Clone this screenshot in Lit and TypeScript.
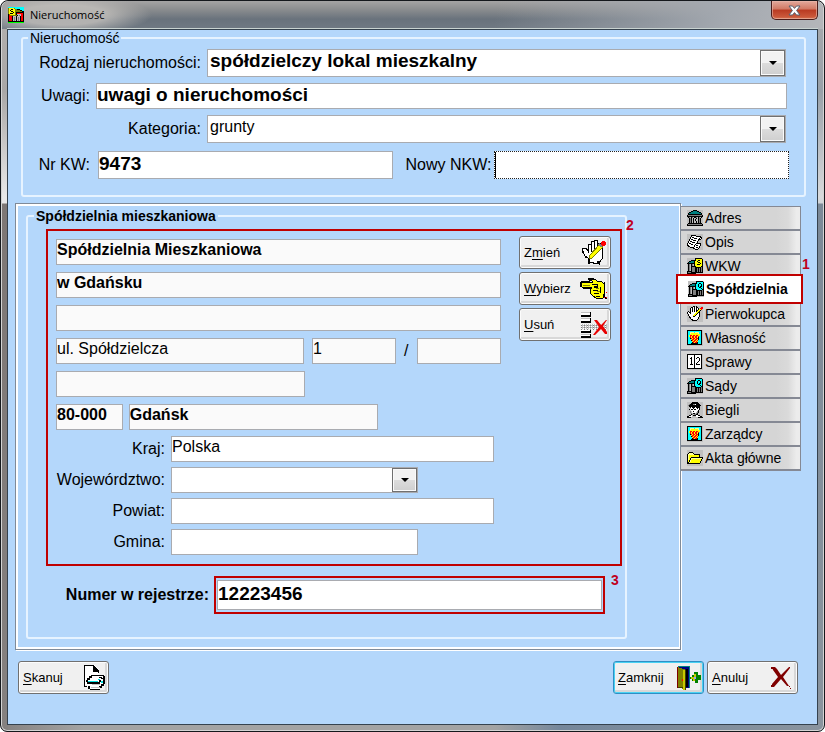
import { LitElement, html, svg, css, nothing } from "lit";
import { customElement, property } from "lit/decorators.js";
import { classMap } from "lit/directives/class-map.js";

const PALETTE: Record<string, string> = {
  k: "#000000", g: "#808080", l: "#c0c0c0", w: "#ffffff", t: "#008080", y: "#ffff00",
  o: "#808000", r: "#ff0000", m: "#800000", c: "#00ffff", e: "#00ff00", p: "#ffff99",
};

const BITMAPS: Record<string, string[]> = {
  app: [
    "cccccccccccccccc",
    "oyyyyyoccccccccc",
    "oyykkyyookkkcccc",
    "oykyyyyoooookkcc",
    "oyykkyyoooooookk",
    "oyyyykyokkkkkkkk",
    "oykkkyyokrrrrrrk",
    "koyyyyyokllllrrk",
    "kroooooooklglrrk",
    "krrrklllklllkrrk",
    "krrrklglklglkrrk",
    "krrrklglklglkrrk",
    "krrrklglklglkrrk",
    "krrrklglklglkrrk",
    "kkkkkkkkkkkkkkkk",
    "eeeeeeeeeeeeeeee",
  ],
  court: [
    "......kkkk......",
    "....kkttttkk....",
    "..kkttttttttkk..",
    ".kttttttttttttk.",
    ".kkkkkkkkkkkkkk.",
    "kggggggggggggggk",
    "kkkkkkkkkkkkkkkk",
    ".kglkglkkglkglk.",
    "..kgk.kllk.kgk..",
    "..kgk.klkl.kgk..",
    "..kgk.klkl.kgk..",
    "..kgk.kllk.kgk..",
    "..kgk.kllk.kgk..",
    ".kkkkkkkkkkkkkk.",
    "kggggggggggggggk",
    "kkkkkkkkkkkkkkkk",
  ],
  paper: [
    "................",
    "....kkkkk.......",
    "....kwwwwkkkkk..",
    "...kwkkwwwwwwkk.",
    "...kwwwkkkwwkwk.",
    "..kwkkwwwwwkkk..",
    "..kwwwkkkwwk....",
    ".kwkkwwwwwk.....",
    ".kwwwkkkwwk.....",
    "kwkkwwwwwkkkkk..",
    "kwwwkkwwkwwwwk..",
    "kkwwwwwkwkkwwk..",
    ".kkwwwwkwwwwk...",
    "...kkkkwwkkwk...",
    "......kkwwwk....",
    "........kkk.....",
  ],
  courtS: [
    "........kkkkkkk.",
    "........kyyyyyyk",
    "....kkkkkyykkyyk",
    "..kktttkyykyyyyk",
    ".ktttttkyyykkyyk",
    "kkkkkkkkyyyyykyk",
    ".kglkglkyykkkyyk",
    ".kglkglkyyyyyyyk",
    ".kglkkkkkyyyyykk",
    ".kglkgggkkkkkkgk",
    ".kglkgggkkgkgkgk",
    ".kglkgggkkgkgkgk",
    ".kglkgggkkgkgkgk",
    "kkkkkgggkkgkgkgk",
    "kgggkkkkkkkkkkkk",
    "kkkkkkkkk.......",
  ],
  courtQ: [
    "........kkkkkkk.",
    "........kcccccck",
    "....kkkkkcckkcck",
    "..kktttkcckcckck",
    ".ktttttkcckcckck",
    "kkkkkkkkcckckkck",
    ".kglkglkccckkcck",
    ".kglkglkccccckck",
    ".kglkkkkkccccckk",
    ".kglkgggkkkkkkgk",
    ".kglkgggkkgkgkgk",
    ".kglkgggkkgkgkgk",
    ".kglkgggkkgkgkgk",
    "kkkkkgggkkgkgkgk",
    "kgggkkkkkkkkkkkk",
    "kkkkkkkkk.......",
  ],
  hand: [
    "......kk.k......",
    "....kkwkwkk...rr",
    "...kwkwkwkwk.rrr",
    "...kwkwkwkwkyyr.",
    "...kwkwkwkkyyk..",
    ".k.kwkwkwkyyk...",
    "kwkkwwwwwyykk...",
    "kwwkwwwwyykwk...",
    ".kwwwwwyykwwk...",
    ".kwwwwyykwwwk...",
    "..kwwwkkwwwwk...",
    "..kkwwwwwwwk....",
    "...kwwwwwwwk....",
    "....kkwwwwk.....",
    ".....kkkkk......",
    "................",
  ],
  shield: [
    "kkkkkkkkkkkkkkk.",
    "kccccccccccccck.",
    "kccppppcppppcck.",
    "kccpyyyyyyypcck.",
    "kccyyyyyyyyyyck.",
    "kcyrryrryrryyck.",
    "kcyryrryrryrcck.",
    "kccryrryrrykcck.",
    "kcckryrryrrkcck.",
    "kcccyrryrrykcck.",
    "kccckryrryrccck.",
    "kccccyrryryccck.",
    "kcccckryrrkccck.",
    "kccckkkkkkkccck.",
    "kkkkkkkkkkkkkkk.",
  ],
  calendar: [
    "kkkkkkkkkkkkkkk.",
    "kwwwwwwkwwwwwwk.",
    "kwwwwwwkwwwwwwk.",
    "kwwwkwwkwwkkwwk.",
    "kwwkkwwkwkwwkwk.",
    "kwwwkwwkwwwwkwk.",
    "kwwwkwwkwwwwkwk.",
    "kwwwkwwkwwwkwwk.",
    "kwwwkwwkwwkwwwk.",
    "kwwwkwwkwkwwwwk.",
    "kwwkkkwkwkkkkwk.",
    "kwwwwwwkwwwwwwk.",
    "kwwwwwwkwwwwwwk.",
    "kwwwwwwkwwwwwwk.",
    "kkkkkkkkkkkkkkk.",
  ],
  expert: [
    ".....kkkkkk.....",
    "....kkkkkkkk....",
    "..gkkkggwkkkk...",
    ".gkkkkkkkkkkkk..",
    "..kkkkkkkkkkk...",
    "...kwkkkwkkkk...",
    "...lwwkwwwkwk...",
    "..kwkkwkkwwwk...",
    "...lwwwwwwwk....",
    "...glwkwwwgk....",
    "...glwwwwlgk....",
    "....glkklgk.....",
    "....kglggkk.....",
    "..kkwlkkkwwkk...",
    "kkwwwl..lwwwwkk.",
    "kkkk.......kkkkk",
  ],
  folder: [
    "................",
    "................",
    "..kkkk..........",
    ".kppppk.........",
    "kppppppkkkkkk...",
    "kpyyyyyyyyyyk...",
    "kpyyyyyyyyyyk...",
    "kpyykkkkkkkkkkkk",
    "kpykpppppppppppk",
    "kpykpyyyyyyyyyk.",
    "kykpyyyyyyyyyyk.",
    "kykpyyyyyyyyyk..",
    "kkpyyyyyyyyyyk..",
    "kkkkkkkkkkkkk...",
    "................",
  ],
};

/** Draws a small indexed-colour icon as runs of equal pixels. */
function bitmap(name: string, filled = false) {
  const rows = BITMAPS[name];
  const runs = rows.flatMap((row, y) =>
    [...row.matchAll(/([a-z])\1*/g)].map(
      (m) => svg`<rect x=${m.index} y=${y} width=${m[0].length} height="1" fill=${PALETTE[m[1]]}></rect>`,
    ),
  );
  return html`<svg width="16" height="16" viewBox="0 0 16 16" shape-rendering="crispEdges" aria-hidden="true">
    ${filled ? svg`<rect width="16" height="16" fill="#c0c0c0"></rect>` : nothing}${runs}
  </svg>`;
}

const art = (content: unknown, left = 0) =>
  html`<svg width="28" height="28" viewBox="${left} 0 28 28" shape-rendering="crispEdges" aria-hidden="true">${content}</svg>`;

const ICON_CHANGE = art(svg`
  <path d="M8 23v-4l-3-2-3-5v-3h4l2 3V5h3V2h3V1h3v3h3v3h2v13l-3 4v1z" fill="#fff" stroke="#000" stroke-width="1"/>
  <path d="M2 12h2v2H2zM5 17h2v2H5zM8 19h2v6H8zM17 22h2v3h-2z" fill="#000"/>
  <path d="M11 4v9M14 3v10M17 4v8" stroke="#000" fill="none"/>
  <path d="M9 17l11-12 3 3-11 11-3 1z" fill="#ffff00" stroke="#808000"/>
  <path d="M19 5l3 3" stroke="#808080" stroke-width="2"/>
  <path d="M22 2h3v1h1v3h-1v1h-3V6h-1V3h1z" fill="#f00"/>`);

const ICON_PICK = art(svg`
  <path d="M1 7h11V6l-3-1V4h6l2 2h4l3 3v10l-1 4h-7l-3-2-3-3v-2l1-2-1-2H2z" fill="#ffff00" stroke="#000"/>
  <path d="M0 7h2v5H0zM1 6h9v1H1zM8 3h6v2H8zM3 12h9v2H3z" fill="#000"/>
  <path d="M12 9h5v2h-3v1h4M13 15h5M14 18h5M16 21h4M20 12v6" stroke="#000" fill="none"/>
  <path d="M3 10h7v1H3zM16 13h3v1h-3zM17 16h3v1h-3z" fill="#808000"/>
  <path d="M24 7h1v15h-1zM25 22h2v2h-2z" fill="#000"/>
  <path d="M24 22h1v1h-1zM26 17h1v1h-1zM26 22h1v1h-1z" fill="#f00"/>`);

const ICON_DELETE = art(svg`
  <path d="M1 1h10v5H1zM1 7h10v5H1zM1 19h10v3H1zM1 23h10v4H1z" fill="#fff"/>
  <path d="M1 4h10v2H1zM10 1h1v5h-1zM1 10h10v2H1zM10 7h1v5h-1zM10 18h1v4h-1zM1 20h10v2H1zM10 23h1v4h-1zM1 25h10v2H1z" fill="#000"/>
  <path d="M1 1h9v1H1zM1 7h9v1H1zM1 23h9v1H1z" fill="#c0c0c0"/>
  <path d="M1 13h26v5H1z" fill="#c0c0c0"/>
  <path d="M1 13h26M1 15h26M1 17h26" stroke="#fff" stroke-dasharray="1 1"/>
  <path d="M1 14h26M1 16h26M1 18h26" stroke="#808080" stroke-dasharray="1 2"/>
  <path d="M14 9h3l4 5 5-5h1l-4 6 4 6v2h-2l-4-5-6 6h-2l6-8z" fill="#e80000" shape-rendering="auto"/>`);

const ICON_SCAN = art(svg`
  <path d="M4 1h9l5 5v15H4z" fill="#fff"/>
  <path d="M3 1h10v1H3zM3 1h1v22H3zM3 22h4v1H3zM12 2h2v5h4v1h-6zM14 3h1v1h1v1h1v1h1v3h-1V7h-3z" fill="#000"/>
  <path d="M6 16l5-5h10l2 1v8l-4 5H8l-2-3z" fill="#fff"/>
  <path d="M10 11h13v1H10zM8 12h3v2H8zM6 14h3v2H6zM5 16h2v2H5zM6 18h13v2H6zM20 14h2v1h-2zM18 16h2v2h-2zM22 12h2v8h-2zM20 20h3v2h-3zM18 22h3v2h-3zM7 22h2v3H7zM9 25h10v1H9zM18 13h3v1h-3z" fill="#000"/>
  <path d="M11 20h8v1h-8zM10 23h9v1h-9z" fill="#c0c0c0"/>
  <path d="M7 17h10v1H7zM17 15h2v1h-2zM20 17h2v2h-2z" fill="#00e0e0"/>`, -3);

const ICON_CLOSE = art(svg`
  <path d="M1 3h12v21H9V6z" fill="#000080"/>
  <path d="M1 2h12v1H1zM12 3h1v21h-1z" fill="#008080"/>
  <path d="M9 5h2v18H9z" fill="#000"/>
  <path d="M1 3l8 3v20l-8-3z" fill="#808000"/>
  <path d="M0 3h1v21H0z" fill="#800000"/>
  <path d="M6 6h2v20H6z" fill="#c8c800"/>
  <path d="M8 6h1v20H8zM1 23h5v1H1z" fill="#404000"/>
  <path d="M5 15h1v2H5z" fill="#f00"/>
  <path d="M13 13h2v-2h2V8h4v3h3v5h-3v3h-3v-2h-3v-2h-2z" fill="#008000"/>
  <path d="M14 13h3v-3h2v4h-1v3h-2v-2h-2z" fill="#c8c800"/>
  <path d="M17 13h2v2h-2z" fill="#a0a0ff"/>`, -4);

const ICON_CANCEL = art(svg`
  <path d="M5 3h3l2 2 4 6 8-8h1v1l-7 9 6 9h-2l-6-7-7 8H5v-3l6-7-5-7z" fill="#800000" shape-rendering="auto"/>
  <path d="M4 3h3v2H4zM4 21h3v2H4zM22 22h1v1h-1zM23 24h1v1h-1z" fill="#800000"/>`);

const TABS = [
  { label: "Adres", icon: "court" },
  { label: "Opis", icon: "paper" },
  { label: "WKW", icon: "courtS" },
  { label: "Spółdzielnia", icon: "courtQ" },
  { label: "Pierwokupca", icon: "hand" },
  { label: "Własność", icon: "shield" },
  { label: "Sprawy", icon: "calendar" },
  { label: "Sądy", icon: "courtQ" },
  { label: "Biegli", icon: "expert" },
  { label: "Zarządcy", icon: "shield" },
  { label: "Akta główne", icon: "folder" },
];

@customElement("push-button")
export class PushButton extends LitElement {
  @property() label = "";
  @property({ type: Number }) accel = 0;
  @property({ type: Boolean, attribute: "default" }) isDefault = false;
  @property({ attribute: false }) icon: unknown = nothing;

  static styles = css`
    :host { display: block; min-width: 91px; }
    button {
      box-sizing: border-box; width: 100%; height: 33px; padding: 0 2px 0 4px;
      display: flex; align-items: center; justify-content: space-between;
      border: 1px solid #707070; border-radius: 3px; background: #f0f0f0;
      box-shadow: inset 0 0 0 1px #fcfcfc, inset -2px -2px 0 1px #d8d8d8;
      font: 13px/16px "Liberation Sans", Arial, sans-serif; color: #000;
    }
    .default { border-color: #2f8fc4; box-shadow: inset 0 0 0 1px #48d2f4, inset -2px -2px 0 1px #d8d8d8; }
    svg { flex: none; }
    u { text-underline-offset: 2px; }
  `;

  render() {
    const { label: l, accel: a } = this;
    return html`<button type="button" class=${classMap({ default: this.isDefault })}>
      <span>${l.slice(0, a)}<u>${l[a]}</u>${l.slice(a + 1)}</span>${this.icon}
    </button>`;
  }
}

@customElement("app-root")
export class AppRoot extends LitElement {
  static styles = css`
    :host {
      display: block; color: #000; background: #fff;
      font: 16px/20px "Liberation Sans", Arial, sans-serif;
    }
    * { box-sizing: border-box; }
    .window {
      min-height: 100vh; display: flex; flex-direction: column;
      padding: 0 6px 6px; border: 1px solid #15181c; border-radius: 8px 8px 7px 7px;
      background:
        linear-gradient(#b4b1af, #a9a7a6 90px, #e8e8e8 196px, #e8e8e8 202px, #7d7775 203px, #858180) left / 7px 100% no-repeat,
        linear-gradient(#a9abae, #98a0a8 90px, #d8dadc 196px, #d0d4d8 202px, #7b8997 203px, #8a949e) right / 7px 100% no-repeat,
        linear-gradient(90deg, #858180, #a3a3a3 10%, #a3a3a3 60%, #75879b 68%, #8a949e);
      box-shadow: inset 0 0 0 1px #d4d4d4;
    }
    .titlebar {
      display: flex; align-items: center; height: 28px; gap: 6px; padding: 0 5px 0 6px;
      margin: 0 -5px; border-radius: 7px 7px 0 0;
      background:
        radial-gradient(ellipse 90px 20px at 60px 14px, #c4c1bdcc 50%, #c4c1bd00),
        linear-gradient(100deg, #b4b1af00 60%, #a4a9b0 88%, #b4b6ba),
        linear-gradient(#a5a4a4, #8b8d8f 30%, #69727c 65%, #707983);
    }
    .titlebar h1 { flex: 1; margin: 0; font: 11px/20px "Open Sans", "Noto Sans", sans-serif; }
    .close {
      align-self: flex-start; width: 47px; height: 19px; padding: 0; display: grid; place-items: center;
      border: 1px solid #4b1c1a; border-top: 0; border-radius: 0 0 5px 5px;
      background: linear-gradient(#e3a99c, #d17863 45%, #b93a22 50%, #cc5a3c 90%, #dd8a66);
      box-shadow: inset 0 0 0 1px #eab9ab99;
    }
    .client {
      flex: 1; border: 1px solid #35424e; background: #b4d7fb; padding: 0 16px 0 7px;
      box-shadow: 0 -1px #c9d3d1;
    }
    fieldset { margin: 0; min-width: 0; border: 2px solid #e6f3ff; border-radius: 3px; }
    legend { font-size: 14px; line-height: 16px; padding: 0 2px; }
    .property { margin: 0 -5px 6px 6px; padding: 3px 17px 14px 0; display: grid; gap: 6px; }
    .property legend { margin-left: 5px; }
    .row { display: flex; align-items: center; gap: 6px; }
    .row > label { text-align: right; flex: none; }
    .wide { margin-right: 1px; }
    .wide > label { width: 178px; }
    .narrow > label { width: 67px; }
    .numbers { gap: 8px; min-height: 32px; }
    .numbers > label + input + label { width: auto; margin-left: 5px; }
    .numbers > input:last-child { margin-left: -5px; margin-right: -2px; }
    input, select {
      font: inherit; color: inherit; min-width: 0; width: 100%; margin: 0; border-radius: 0;
      border: 1px solid #a9abb0; background: #fff; padding: 0 0 4px; outline: none; appearance: none;
    }
    input { height: 26px; display: block; }
    input[readonly] { background: #fafafa; }
    .tall { height: 28px; }
    .big { font-size: 19px; font-weight: bold; }
    input.big { padding-bottom: 2px; }
    .bold { font-weight: bold; }
    .focused { border: 1px dotted #222; box-shadow: inset 1px 0 #000; }
    .combo { display: flex; flex: 1; min-width: 0; height: 28px; border: 1px solid #a9abb0; background: #fff; position: relative; }
    .combo select { border: 0; flex: 1; padding-left: 2px; }
    .combo i {
      position: absolute; right: 0; top: 0; bottom: 0; width: 25px; pointer-events: none;
      display: grid; place-items: center; border: 1px solid #707070;
      background: linear-gradient(#f2f2f2 48%, #dcdcdc 52%, #cfcfcf); box-shadow: inset 0 0 0 1px #fafafa;
    }
    .combo i::after { content: ""; border: 4px solid transparent; border-top-color: #000; border-bottom: 0; }
    .workspace { display: flex; align-items: flex-start; }
    .panel {
      flex: 1; min-width: 0; border: 1px solid #7f8a98; padding: 4px 53px 10px 10px;
      box-shadow: inset 2px 2px #fff, inset -1px -2px #fff, 1px 1px #fff;
    }
    .coop { padding: 5px 3px 23px 18px; }
    .coop legend { font-weight: bold; margin-left: -12px; }
    .marked { border: 2px solid #c00000; position: relative; }
    .address { display: grid; grid-template-columns: 1fr 92px; gap: 18px; padding: 8px 9px 9px 8px; }
    .fields { display: grid; gap: 7px; min-width: 0; }
    .actions { display: flex; flex-direction: column; gap: 3px; margin-top: -3px; }
    .street { display: grid; grid-template-columns: 248fr 84fr 5px 84fr; gap: 8px; align-items: center; }
    .half { width: 56%; }
    .city { display: grid; grid-template-columns: 15% 56%; gap: 6px; }
    .region { display: grid; grid-template-columns: 109px 1fr; gap: 5px 6px; align-items: center; margin-right: 7px; margin-top: -1px; }
    .region > label { text-align: right; }
    .region .combo { height: 26px; }
    .short { width: 247px; }
    .register { display: flex; align-items: center; margin: 10px 17px 0 0; gap: 5px; }
    .register > label { flex: none; width: 163px; text-align: right; }
    .register .marked { flex: 1; padding: 2px 1px; }
    .register input { height: 30px; }
    .note { position: absolute; color: #c00020; font: bold 14px/16px "Liberation Sans", Arial, sans-serif; }
    .address .note { left: calc(100% + 6px); top: -14px; }
    .register .note { left: calc(100% + 8px); top: -6px; }
    .tabs { width: 120px; flex: none; display: grid; margin-top: 3px; }
    .tab {
      font: 14px/16px "Liberation Sans", Arial, sans-serif; color: #000; height: 24px; width: 100%;
      padding: 0 0 0 6px; display: flex; align-items: center; gap: 2px;
      border: 0; border-right: 1px solid #858994; border-bottom: 2px solid #858994;
      background: linear-gradient(90deg, #d5d5d5 80%, #dadada 90%, #ececec 97%);
    }
    .tab:first-child { height: 25px; border-top: 1px solid #858994; }
    .tab svg { flex: none; }
    .slot { height: 24px; position: relative; }
    .slot .marked { margin: -5px -2px -2px -5px; height: 30px; display: flex; background: #fff; }
    .slot .tab { height: auto; padding-left: 10px; border: 0; background: #fff; font-weight: bold; }
    .slot .note { left: calc(100% + 1px); top: -20px; }
    .footer { display: flex; gap: 3px; margin: 11px 3px 26px; }
    .footer :first-child { margin-right: auto; }
  `;

  private tab(t: { label: string; icon: string }) {
    const selected = t.label === "Spółdzielnia";
    const button = html`<button type="button" role="tab" class="tab" aria-selected=${selected}>
      ${bitmap(t.icon, true)}<span>${t.label}</span>
    </button>`;
    return selected
      ? html`<div class="slot" role="presentation"><div class="marked" role="presentation">${button}<span class="note">1</span></div></div>`
      : button;
  }

  render() {
    return html`
      <div class="window">
        <header class="titlebar">
          ${bitmap("app")}
          <h1>Nieruchomość</h1>
          <button type="button" class="close" aria-label="Zamknij okno">
            <svg width="13" height="11" viewBox="0 0 13 11" aria-hidden="true">
              <path d="M1 1h3.5l2 2.4L8.500 1H12L8.600 5.500 12 10H8.500l-2-2.400L4.500 10H1l3.400-4.500z" fill="#fff" stroke="#56606e" />
            </svg>
          </button>
        </header>
        <main class="client">
          <fieldset class="property">
            <legend>Nieruchomość</legend>
            <div class="row wide">
              <label for="kind">Rodzaj nieruchomości:</label>
              <div class="combo"><select id="kind" class="big"><option>spółdzielczy lokal mieszkalny</option></select><i></i></div>
            </div>
            <div class="row narrow">
              <label for="remarks">Uwagi:</label>
              <input id="remarks" class="big" value="uwagi o nieruchomości" />
            </div>
            <div class="row wide">
              <label for="category">Kategoria:</label>
              <div class="combo"><select id="category"><option>grunty</option></select><i></i></div>
            </div>
            <div class="row narrow numbers">
              <label for="kw">Nr KW:</label>
              <input id="kw" class="big tall" value="9473" />
              <label for="nkw">Nowy NKW:</label>
              <input id="nkw" class="tall focused" />
            </div>
          </fieldset>
          <div class="workspace">
            <section class="panel" role="tabpanel">
              <fieldset class="coop">
                <legend>Spółdzielnia mieszkaniowa</legend>
                <div class="marked address">
                  <div class="fields">
                    <input class="bold" readonly aria-label="Nazwa" value="Spółdzielnia Mieszkaniowa" />
                    <input class="bold" readonly aria-label="Nazwa, wiersz 2" value="w Gdańsku" />
                    <input readonly aria-label="Nazwa, wiersz 3" />
                    <div class="street">
                      <input readonly aria-label="Ulica" value="ul. Spółdzielcza" />
                      <input readonly aria-label="Numer domu" value="1" />
                      <span>/</span>
                      <input readonly aria-label="Numer lokalu" />
                    </div>
                    <input class="half" readonly aria-label="Ulica, wiersz 2" />
                    <div class="city">
                      <input class="bold" readonly aria-label="Kod pocztowy" value="80-000" />
                      <input class="bold" readonly aria-label="Miejscowość" value="Gdańsk" />
                    </div>
                    <div class="region">
                      <label for="country">Kraj:</label>
                      <input id="country" value="Polska" />
                      <label for="province">Wojewórdztwo:</label>
                      <div class="combo short"><select id="province"><option></option></select><i></i></div>
                      <label for="county">Powiat:</label>
                      <input id="county" />
                      <label for="commune">Gmina:</label>
                      <input id="commune" class="short" />
                    </div>
                  </div>
                  <div class="actions">
                    <push-button label="Zmień" .accel=${1} .icon=${ICON_CHANGE}></push-button>
                    <push-button label="Wybierz" .icon=${ICON_PICK}></push-button>
                    <push-button label="Usuń" .icon=${ICON_DELETE}></push-button>
                  </div>
                  <span class="note">2</span>
                </div>
                <div class="register">
                  <label class="bold" for="register">Numer w rejestrze:</label>
                  <div class="marked">
                    <input id="register" class="big" value="12223456" />
                    <span class="note">3</span>
                  </div>
                </div>
              </fieldset>
            </section>
            <div class="tabs" role="tablist">${TABS.map((t) => this.tab(t))}</div>
          </div>
          <footer class="footer">
            <push-button label="Skanuj" .icon=${ICON_SCAN}></push-button>
            <push-button label="Zamknij" default .icon=${ICON_CLOSE}></push-button>
            <push-button label="Anuluj" .icon=${ICON_CANCEL}></push-button>
          </footer>
        </main>
      </div>
    `;
  }
}
